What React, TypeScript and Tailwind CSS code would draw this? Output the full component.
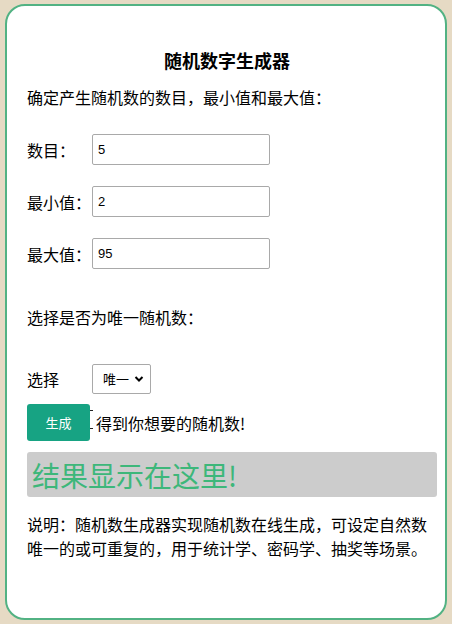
import React from 'react';

const font = { fontFamily: '"Microsoft YaHei", "Noto Sans CJK SC", "Liberation Sans", sans-serif' };

function Field({ label, value }: { label: string; value: string }) {
  return (
    <div className="flex items-center h-[31px] mb-[21px]">
      <span className="w-[65px] text-[16px] text-black">{label}</span>
      <input
        readOnly
        value={value}
        className="w-[178px] h-[31px] border border-[#a9a9a9] rounded-[2px] px-[5px] text-[13px] text-black bg-white outline-none"
        style={{ fontFamily: '"Liberation Sans", Arial, sans-serif' }}
      />
    </div>
  );
}

export default function App() {
  return (
    <div className="w-[452px] h-[624px] bg-[#e6dac4] pt-[4px] pl-[5px] pr-[5px] pb-[4px] overflow-hidden" style={font}>
      <div className="h-[616px] bg-white border-2 border-[#52b283] rounded-[20px] pl-[20px] pr-[8px] pt-[40px]">
        <h1 className="text-center text-[18px] font-bold text-black leading-[28px] mb-[11px] pr-[10px]">随机数字生成器</h1>
        <p className="text-[16px] text-black leading-[24px] mb-[25px]">确定产生随机数的数目，最小值和最大值：</p>

        <Field label="数目：" value="5" />
        <Field label="最小值：" value="2" />
        <Field label="最大值：" value="95" />

        <p className="text-[16px] text-black leading-[24px] mt-[36px] mb-[35px]">选择是否为唯一随机数：</p>

        <div className="flex items-center h-[30px]">
          <span className="w-[65px] text-[16px] text-black">选择</span>
          <div className="w-[59px] h-[30px] border border-[#a9a9a9] rounded-[2px] flex items-center justify-between pl-[10px] pr-[6px] text-[13px] text-black">
            <span>唯一</span>
            <svg width="10" height="8" viewBox="0 0 10 8">
              <path d="M1.5 2 L5 5.5 L8.5 2" fill="none" stroke="#000" strokeWidth="2" />
            </svg>
          </div>
        </div>

        <div className="flex items-center mt-[10px] h-[37px]">
          <button className="w-[63px] h-[37px] bg-[#17a383] text-white text-[13px] rounded-[3px]">生成</button>
          <span className="relative w-[6px] h-[37px]">
            <span className="absolute left-0 top-[6px] w-[3px] border-t border-[#222]" />
            <span className="absolute left-0 top-[24px] w-[3px] border-t border-[#222]" />
          </span>
          <span className="text-[16px] text-black">得到你想要的随机数!</span>
        </div>

        <div className="mt-[11px] h-[45px] bg-[#cccccc] rounded-[3px] flex items-center pl-[5px]">
          <span className="text-[28px] text-[#3db77a] leading-none">结果显示在这里!</span>
        </div>

        <p className="mt-[15px] text-[16px] text-black leading-[24px]">
          说明：随机数生成器实现随机数在线生成，可设定自然数唯一的或可重复的，用于统计学、密码学、抽奖等场景。
        </p>
      </div>
    </div>
  );
}
